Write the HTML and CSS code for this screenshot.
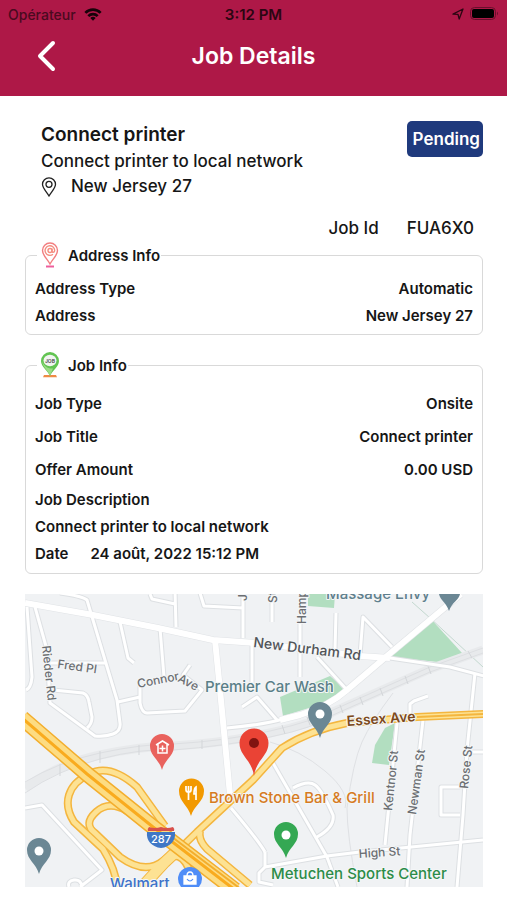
FILE: index.html
```html
<!DOCTYPE html>
<html lang="en">
<head>
    <meta charset="UTF-8">
    <meta name="viewport" content="width=device-width, initial-scale=1.0">
    <title>Job Details</title>
    <link rel="stylesheet" href="styles.css">
</head>
<body>

<header class="topbar">
    <div class="status">
        <div class="carrier">
            <span>Opérateur</span>
            <svg width="18" height="13" viewBox="0 0 20 14" fill="none" stroke="#160309" stroke-width="3">
                <path d="M1.5 5.2a12 12 0 0 1 17 0"/>
                <path d="M4.8 8.8a7.4 7.4 0 0 1 10.4 0"/>
                <path d="M10 14l-3-3a4.3 4.3 0 0 1 6 0z" fill="#160309" stroke="none"/>
            </svg>
        </div>
        <div class="clock">3:12 PM</div>
        <div class="power">
            <svg width="12" height="12" viewBox="0 0 12 12" fill="none" stroke="#2b0612" stroke-width="1.3" stroke-linejoin="round">
                <path d="M1 6.2L11 1 7.2 11 6 6.4z"/>
            </svg>
            <svg width="29" height="14" viewBox="0 0 29 14">
                <rect x="0.5" y="0.5" width="25" height="12" rx="4" fill="none" stroke="#6a0f2c"/>
                <rect x="2" y="2" width="22" height="9" rx="2" fill="#000"/>
                <path d="M27 4.5q2 2 0 4z" fill="#6a0f2c"/>
            </svg>
        </div>
    </div>
    <div class="navbar">
        <button class="back" aria-label="Back">
            <svg width="20" height="32" viewBox="0 0 20 32" fill="none" stroke="#fff" stroke-width="4" stroke-linecap="round" stroke-linejoin="round">
                <path d="M17 3L4 16l13 13"/>
            </svg>
        </button>
        <h1>Job Details</h1>
    </div>
</header>

<main class="content">
    <section class="summary">
        <div class="summary-text">
            <h2>Connect printer</h2>
            <p>Connect printer to local network</p>
            <p class="place">
                <svg width="16" height="20" viewBox="0 0 16 20" fill="none" stroke="#222" stroke-width="1.3">
                    <path d="M8 19C5 14 1.5 11 1.5 7.3a6.5 6.5 0 0 1 13 0C14.5 11 11 14 8 19z"/>
                    <circle cx="8" cy="7.3" r="3"/>
                </svg>
                <span>New Jersey 27</span>
            </p>
        </div>
        <span class="badge">Pending</span>
    </section>

    <div class="job-id">
        <span>Job Id</span>
        <span>FUA6X0</span>
    </div>

    <fieldset class="card">
        <legend>
            <svg width="18" height="26" viewBox="0 0 18 26" fill="none" stroke-width="1.4">
                <path d="M9 22C6.5 17 1.5 13.5 1.5 8.5a7.5 7.5 0 0 1 15 0c0 5-5 8.5-7.5 13.5z" stroke="#f27e80"/>
                <path d="M12 12.2A4.8 4.8 0 1 1 13.7 8.5c0 2.2-2.7 2.4-2.7.3V6.5" stroke="#f58d80"/>
                <circle cx="9" cy="8.5" r="2" stroke="#f58d80"/>
                <path d="M5 24.5h8" stroke="#ee5e9c" stroke-width="2"/>
            </svg>
            Address Info
        </legend>
        <dl class="rows">
            <div><dt>Address Type</dt><dd>Automatic</dd></div>
            <div><dt>Address</dt><dd>New Jersey 27</dd></div>
        </dl>
    </fieldset>

    <fieldset class="card job-card">
        <legend>
            <svg width="18" height="26" viewBox="0 0 18 26">
                <path d="M3 23h12l1 2.2H2z" fill="#ef8b45"/>
                <path d="M9 24C6.5 18 0 15 0 9a9 9 0 0 1 18 0c0 6-6.500 9-9 15z" fill="#62c452"/>
                <path d="M9 24C7 18 1.5 15 1 9c2 5 6 8 11 7.5z" fill="#9bdc86"/>
                <ellipse cx="9" cy="8.5" rx="6.5" ry="5.8" fill="#f1f4f1"/>
                <text x="9" y="10.5" font-size="5" text-anchor="middle" fill="#444">JOB</text>
            </svg>
            Job Info
        </legend>
        <dl class="rows wide">
            <div><dt>Job Type</dt><dd>Onsite</dd></div>
            <div><dt>Job Title</dt><dd>Connect printer</dd></div>
            <div><dt>Offer Amount</dt><dd>0.00 USD</dd></div>
        </dl>
        <dl class="rows">
            <div><dt>Job Description</dt></div>
            <div><dd>Connect printer to local network</dd></div>
            <div class="date"><dt>Date</dt><dd>24 août, 2022 15:12 PM</dd></div>
        </dl>
    </fieldset>

    <svg class="map" viewBox="25 594 458 293" role="img" aria-label="Map">
        <defs>
            <g id="streets">
                <path d="M35 607L47 650 50 703 95 736Q105 737 113 734T120 723L117 700 93 620 87 600Q82 596 60 593"/>
                <path d="M27 607L32 677Q31 688 26 690"/>
                <path d="M53 690L83 693Q88 695 89 702L92 717Q92 724 87 728M50 663H105"/>
                <path d="M120 622L128 658 134 663M160 628L164 677M118 702L140 697"/>
                <path d="M140 684L140 703Q142 713 147 713L185 711 202 690 183 675 190 665"/>
                <path d="M150 594L152 599 175 604M175 590L176 627M200 593L204 606 243 608M243 597V638"/>
                <path d="M252 645V690M242 707L257 697 277 720M227 728Q262 725 283 719"/>
                <path d="M272 600V622M300 620V677M336 613L335 650M360 655L363 617 392 647M317 657L347 690"/>
                <path d="M475 673L467 750 463 815 457 887M410 713V704L414 701 428 696M397 723L385 845M423 720L410 835 407 887"/>
                <path d="M273 763L327 857 338 887M293 788Q308 780 315 785T333 815Q335 827 317 837"/>
                <path d="M460 787H441V815H460M472 752H484M265 852Q258 840 231 808"/>
                <path d="M273 885L259 882V873L265 867 327 856 360 852 483 840M265 867V852"/>
                <path d="M25 808L42 805 102 870 80 887M69 887Q67 881 74 880T82 887"/>
                <path d="M390 658L450 667 484 676"/>
            </g>
            <g id="avenues">
                <path d="M25 603L93 615 158 628 213 640 257 643 360 656 390 658"/>
                <path d="M461 594L387 656 347 690Q329 706 300 715L280 720"/>
                <path d="M215 640L220 690 231 805"/>
            </g>
            <g id="ramps">
                <path d="M117 887Q116 870 103 849L74 822Q65 808 69 795T89 774Q110 763 137 787L165 826"/>
                <path d="M127 811Q109 800 96 812T95 833L120 857Q145 875 163 861T190 872"/>
                <path d="M200 831Q198 840 207 849L250 885"/>
                <path d="M484 714L417 717 347 723Q310 730 282 748L253 780 197 832 160 868"/>
            </g>
        </defs>
        <rect x="25" y="594" width="458" height="293" fill="#f0f2f4"/>

        <!-- parks -->
        <g fill="#b2dec0">
            <path d="M389 657L430 618l32 35-14 10z"/>
            <path d="M308 594h27l-1 14-26-2z"/>
            <path d="M280 697l50-21 15 13-23 15-39 12z"/>
            <path d="M385 728l10-5-6 42-17-2 3-18z"/>
        </g>
        <path d="M412 602l18 16 53 49" fill="none" stroke="#c3d8cf"/>

        <!-- railway -->
        <g fill="none">
            <path d="M25 788Q58 764 100 755T173 746Q225 743 270 733T333 712L430 669 483 650" stroke="#e8eaec" stroke-width="9"/>
            <path d="M25 782Q58 762 100 753T173 744Q225 741 270 731T333 710L430 667 483 648" stroke="#dddfe2"/>
            <path d="M25 793Q58 770 100 759T173 750Q225 746 270 737T333 715L430 672 483 653" stroke="#dddfe2"/>
            <path d="M60 764v12M100 751v12M139 745v10M202 740v9M282 725l3 9M307 717l3 8M340 705l3 8M360 697l3 8M380 688l3 8M405 676l3 8M428 666l3 8M468 651l4 7" stroke="#d3d6d9"/>
            <path d="M393 693Q371 722 362 742T347 808Q347 835 357 887M270 742Q300 750 325 771T345 808" stroke="#dfe1e4"/>
        </g>

        <!-- roads, grey casing under a white fill -->
        <use href="#streets" class="road casing"/>
        <use href="#avenues" class="road avenue-casing"/>
        <use href="#streets" class="road street"/>
        <use href="#avenues" class="road avenue"/>

        <!-- highway and ramps -->
        <use href="#ramps" class="road ramp-edge"/>
        <path d="M180 848L165 862 140 889" class="road" stroke="#f4b63f" stroke-width="12"/>
        <use href="#ramps" class="road ramp"/>
        <path d="M180 848L165 862 140 889" class="road" stroke="#fde293" stroke-width="10"/>
        <path d="M484 714L417 717" class="road" stroke="#f4b63f" stroke-width="2"/>
        <g fill="none">
            <path d="M22 718L87 774 153 827 235 890" stroke="#f3ae2d" stroke-width="16"/>
            <path d="M22 718L87 774 153 827 235 890" stroke="#fddc82" stroke-width="13"/>
            <path d="M22 718L87 774 153 827 235 890" stroke="#f9ab1e" stroke-width="3"/>
            <path d="M172 837L242 890" stroke="#f3ae2d" stroke-width="2"/>
        </g>

        <!-- labels -->
        <g class="street-name">
            <text transform="translate(42 646) rotate(84)">Rieder Rd</text>
            <text transform="translate(57 668) rotate(8)">Fred Pl</text>
            <text transform="translate(138 688) rotate(-11)">Connor</text>
            <text transform="translate(177 681) rotate(28)">Ave</text>
            <text transform="translate(306 624) rotate(-90)">Hamp</text>
            <text transform="translate(277 603) rotate(-90)">St</text>
            <text transform="translate(247 601) rotate(-90)">J</text>
            <text transform="translate(392 811) rotate(-84)">Kentnor St</text>
            <text transform="translate(416 815) rotate(-82)">Newman St</text>
            <text transform="translate(468 789) rotate(-84)">Rose St</text>
            <text transform="translate(359 858) rotate(-4)">High St</text>
        </g>
        <text class="road-name" transform="translate(253 647) rotate(7)">New Durham Rd</text>
        <text class="essex" transform="translate(347 726) rotate(-4)">Essex Ave</text>
        <g class="poi">
            <text x="205" y="692" fill="#5a7f88">Premier Car Wash</text>
            <text x="326" y="599" fill="#5f7f8d">Massage Envy</text>
            <text x="209" y="803" fill="#d67b22">Brown Stone Bar &amp; Grill</text>
            <text x="271" y="879" fill="#2c8c48">Metuchen Sports Center</text>
            <text x="110" y="889" fill="#3d72c9">Walmart</text>
        </g>

        <!-- place pins -->
        <g fill="#6b8794">
            <path d="M320 738C317 727 308 724 308 714a12 12 0 0 1 24 0C332 724 323 727 320 738z"/>
            <path d="M39 874C36 863 27 860 27 850a12 12 0 0 1 24 0C51 860 42 863 39 874z"/>
            <path d="M439 594h21c-1 6-8 8-11 17-3-9-9-11-10-17z"/>
            <circle cx="320" cy="714" r="4.5" fill="#fff"/>
            <circle cx="39" cy="851" r="4.5" fill="#fff"/>
        </g>
        <path d="M286 858C283 847 274 844 274 834a12 12 0 0 1 24 0C298 844 289 847 286 858z" fill="#34a853"/>
        <circle cx="286" cy="835" r="4.5" fill="#fff"/>
        <path d="M162 770C159 759 150 756 150 746a12 12 0 0 1 24 0C174 756 165 759 162 770z" fill="#e9625d"/>
        <path d="M156 745l6.5-4 6.5 4M158 744v9h9v-9M162.5 745.5v6M159.5 748.5h6" fill="none" stroke="#fff" stroke-width="1.5"/>
        <path d="M191 816C188 805 179 802 179 791a12.5 12.5 0 0 1 25 0C204 802 194 805 191 816z" fill="#f29900"/>
        <path d="M186 786v4q0 2 2.5 2t2.5-2v-4M188.5 786v14M196 800v-13q-2 1-2 7h2" fill="none" stroke="#fff" stroke-width="1.7"/>
        <circle cx="190" cy="879" r="12" fill="#4f8df7"/>
        <path d="M184 876h12v8h-12z" fill="#fff" stroke="#fff" stroke-width="1.3"/>
        <path d="M187 876q0-4 3-4t3 4" fill="none" stroke="#fff" stroke-width="1.3"/>
        <path d="M187 879q3 4 6 0" fill="none" stroke="#4f8df7" stroke-width="1.2"/>
        <path d="M254 776C252 760 239.5 756 239.5 743a14.5 14.5 0 0 1 29 0C268.5 756 256 760 254 776z" fill="#ea4335"/>
        <circle cx="254" cy="743" r="5" fill="#811411"/>

        <!-- route shield -->
        <path d="M147 832h28c1 9-5 15-14 16-9-1-15-7-14-16z" fill="#3f77c6"/>
        <path d="M148 831q-1-2 1-4 6 2 12 0 6 2 12 0 2 2 1 4z" fill="#d8504b"/>
        <text class="shield" x="161" y="843" text-anchor="middle">287</text>
    </svg>
</main>

</body>
</html>
```
FILE: styles.css
```css
* {
    box-sizing: border-box;
}
body {
    margin: 0;
    font-family: Inter, "Liberation Sans", sans-serif;
    font-weight: 500;
    background: #fff;
    color: #161616;
}
h1, h2, p, dl, dd {
    margin: 0;
}
.topbar {
    background: #ae1847;
    height: 96px;
}
.status {
    display: grid;
    grid-template-columns: 1fr auto 1fr;
    align-items: center;
    height: 28px;
    padding: 0 8px;
    font-size: 14px;
    color: #4a0a1f;
}
.carrier, .power {
    display: flex;
    align-items: center;
    gap: 8px;
}
.power {
    justify-content: flex-end;
    gap: 6px;
}
.clock {
    font-size: 15px;
    font-weight: 600;
    color: #2b0612;
}
.navbar {
    display: grid;
    grid-template-columns: 60px 1fr 60px;
    align-items: center;
    height: 56px;
}
.navbar h1 {
    text-align: center;
    font-size: 23px;
    font-weight: 600;
    color: #fff;
}
.back {
    display: flex;
    justify-content: flex-end;
    padding: 0 4px;
    border: none;
    background: none;
    cursor: pointer;
}
.content {
    padding: 25px 24px 12px 25px;
}
.summary {
    display: flex;
    justify-content: space-between;
    align-items: flex-start;
    padding-left: 16px;
    font-size: 17px;
    line-height: 25px;
}
.summary h2 {
    font-size: 19px;
    font-weight: 600;
    line-height: 28px;
}
.place {
    display: flex;
    align-items: center;
    gap: 14px;
}
.badge {
    padding: 0 3px 0 6px;
    border-radius: 5px;
    background: #1f3a7d;
    color: #fff;
    font-size: 17px;
    font-weight: 600;
    line-height: 36px;
}
.job-id {
    display: flex;
    justify-content: flex-end;
    gap: 28px;
    padding: 17px 9px 0;
    font-size: 17px;
    line-height: 24px;
}
.card {
    margin: 0 0 15px;
    padding: 5px 9px;
    border: 1px solid #d9d9d9;
    border-radius: 6px;
    font-size: 15px;
    font-weight: 600;
}
.card legend {
    display: flex;
    align-items: center;
    gap: 9px;
    height: 30px;
    margin-left: 2px;
    padding: 0 1px 0 4px;
}
.rows > div {
    display: flex;
    justify-content: space-between;
    line-height: 27px;
}
.rows.wide > div {
    line-height: 33px;
}
.job-card {
    margin-bottom: 20px;
    padding-top: 7px;
    padding-bottom: 6px;
}
.rows .date {
    justify-content: flex-start;
    gap: 22px;
}
.map {
    display: block;
    width: 100%;
    height: auto;
}
.road {
    fill: none;
    stroke-linejoin: round;
}
.casing {
    stroke: #dde0e3;
    stroke-width: 5;
}
.street {
    stroke: #fff;
    stroke-width: 3;
}
.avenue-casing {
    stroke: #e0e3e6;
    stroke-width: 7;
}
.avenue {
    stroke: #fff;
    stroke-width: 6;
}
.ramp-edge {
    stroke: #f4b63f;
    stroke-width: 8;
}
.ramp {
    stroke: #fde293;
    stroke-width: 5;
}
.map text {
    paint-order: stroke;
    stroke: #f4f6f7;
    stroke-width: 2px;
    stroke-linejoin: round;
}
.street-name {
    font-size: 12px;
    fill: #6b6e72;
}
.road-name {
    font-size: 14px;
    fill: #505357;
}
.essex {
    font-size: 14px;
    font-weight: 600;
    fill: #7d4a1c;
}
.poi {
    font-size: 15px;
}
.map .shield {
    font-size: 11px;
    fill: #fff;
    stroke: none;
}
```
